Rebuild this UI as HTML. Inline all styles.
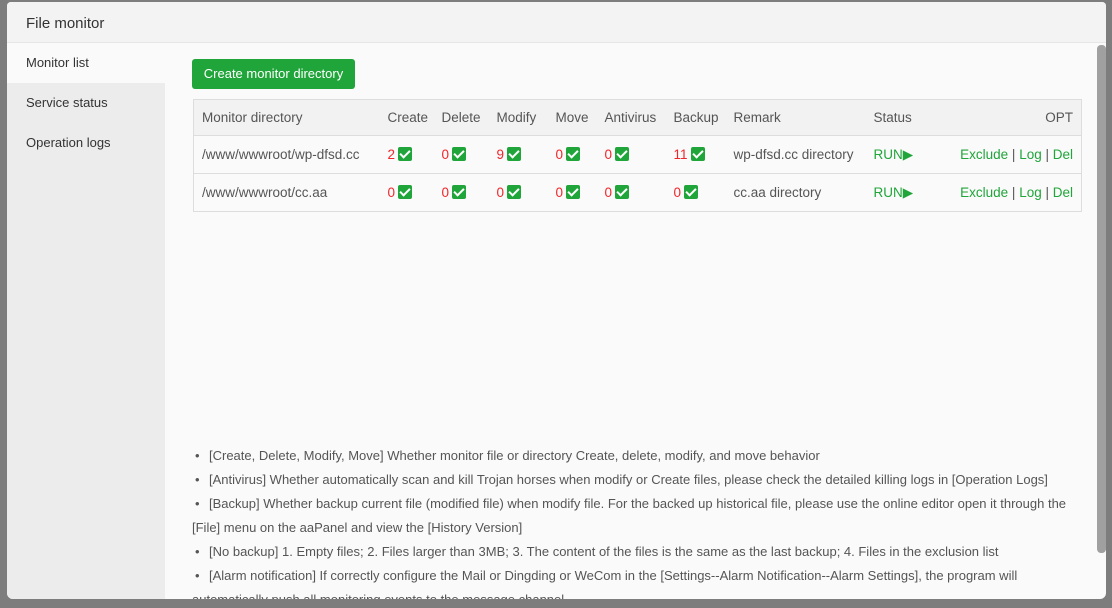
<!DOCTYPE html>
<html><head><meta charset="utf-8"><style>
*{margin:0;padding:0;box-sizing:border-box}
body{width:1112px;height:608px;background:#7d7d7d;position:relative;overflow:hidden;font-family:"Liberation Sans",sans-serif;color:#555;font-size:13px}
.modal{position:absolute;left:7px;top:2px;width:1099px;height:597px;background:#fafafa;border-radius:4px 4px 6px 6px;overflow:hidden}
.hd{height:41px;background:#f3f3f3;border-bottom:1px solid #e6e6e6;font-size:15px;color:#333;padding:13px 0 0 19px}
.side{position:absolute;left:0;top:41px;width:158px;bottom:0;background:#ececec}
.side div{height:40px;line-height:40px;padding-left:19px;font-size:13px;color:#333}
.side .on{background:#fafafa}
.btn{position:absolute;left:185px;top:57px;width:163px;height:30px;background:#20a53a;color:#fff;border-radius:3px;font-size:13px;line-height:30px;text-align:center}
table{position:absolute;left:186px;top:97px;width:889px;border-collapse:collapse;border:1px solid #ddd;font-size:13.5px}
th{background:#f2f2f2;font-weight:normal;text-align:left;height:36px;color:#555;border-bottom:1px solid #ddd}
td{height:38px;border-bottom:1px solid #ddd;color:#555;white-space:nowrap}
.r{color:#f0262a}
.ck{display:inline-block;width:14px;height:14px;background:#20a53a;border-radius:2px;vertical-align:-2px;margin-left:3px;position:relative}
.ck:after{content:"";position:absolute;left:4px;top:1px;width:4px;height:8px;border:solid #fff;border-width:0 2px 2px 0;transform:rotate(45deg)}
.g{color:#20a53a}
.notes{position:absolute;left:185px;top:442px;width:900px;font-size:13px;line-height:24px;color:#555}
.notes p span{display:inline-block;width:17px;padding-left:3px}
.sb{position:absolute;left:1090px;top:43px;width:9px;height:508px;background:#a0a0a0;border-radius:4px}
</style></head><body>
<div class="modal">
<div class="hd">File monitor</div>
<div class="side"><div class="on">Monitor list</div><div>Service status</div><div>Operation logs</div></div>
<div class="btn">Create monitor directory</div>
<table>
<tr><th style="padding-left:8px;width:194px">Monitor directory</th><th style="width:54px">Create</th><th style="width:55px">Delete</th><th style="width:59px">Modify</th><th style="width:49px">Move</th><th style="width:69px">Antivirus</th><th style="width:60px">Backup</th><th style="width:140px">Remark</th><th>Status</th><th style="text-align:right;padding-right:8px">OPT</th></tr>
<tr><td style="padding-left:8px">/www/wwwroot/wp-dfsd.cc</td><td><span class="r">2</span><i class="ck"></i></td><td><span class="r">0</span><i class="ck"></i></td><td><span class="r">9</span><i class="ck"></i></td><td><span class="r">0</span><i class="ck"></i></td><td><span class="r">0</span><i class="ck"></i></td><td><span class="r">11</span><i class="ck"></i></td><td>wp-dfsd.cc directory</td><td class="g">RUN▶</td><td class="g" style="text-align:right;padding-right:8px">Exclude <span style="color:#555">|</span> Log <span style="color:#555">|</span> Del</td></tr>
<tr><td style="padding-left:8px">/www/wwwroot/cc.aa</td><td><span class="r">0</span><i class="ck"></i></td><td><span class="r">0</span><i class="ck"></i></td><td><span class="r">0</span><i class="ck"></i></td><td><span class="r">0</span><i class="ck"></i></td><td><span class="r">0</span><i class="ck"></i></td><td><span class="r">0</span><i class="ck"></i></td><td>cc.aa directory</td><td class="g">RUN▶</td><td class="g" style="text-align:right;padding-right:8px">Exclude <span style="color:#555">|</span> Log <span style="color:#555">|</span> Del</td></tr>
</table>
<div class="notes">
<p><span>•</span>[Create, Delete, Modify, Move] Whether monitor file or directory Create, delete, modify, and move behavior</p>
<p><span>•</span>[Antivirus] Whether automatically scan and kill Trojan horses when modify or Create files, please check the detailed killing logs in [Operation Logs]</p>
<p><span>•</span>[Backup] Whether backup current file (modified file) when modify file. For the backed up historical file, please use the online editor open it through the<br>[File] menu on the aaPanel and view the [History Version]</p>
<p><span>•</span>[No backup] 1. Empty files; 2. Files larger than 3MB; 3. The content of the files is the same as the last backup; 4. Files in the exclusion list</p>
<p><span>•</span>[Alarm notification] If correctly configure the Mail or Dingding or WeCom in the [Settings--Alarm Notification--Alarm Settings], the program will<br>automatically push all monitoring events to the message channel</p>
</div>
<div class="sb"></div>
</div>
</body></html>
